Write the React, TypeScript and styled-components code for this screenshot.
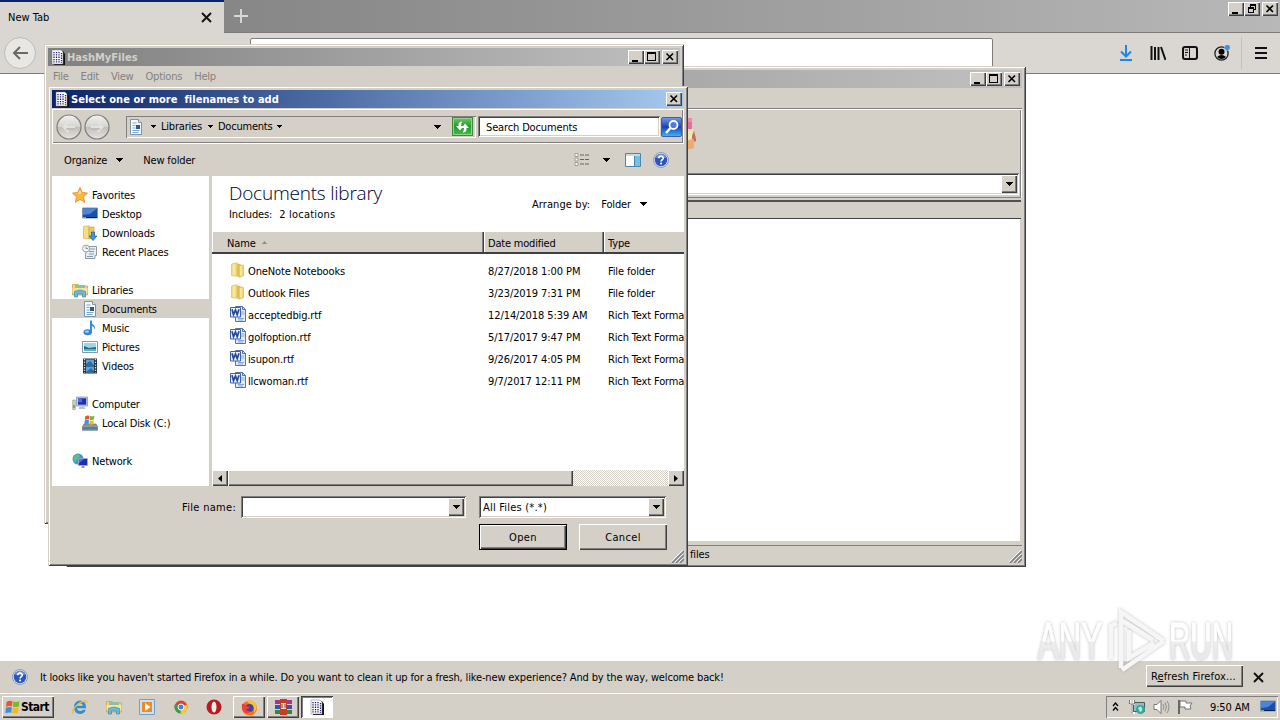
import React from "react";
import styled, { createGlobalStyle, css } from "styled-components";

const FACE = "#d4d0c8";

const Global = createGlobalStyle`
  * { box-sizing: border-box; }
  html, body { margin: 0; padding: 0; }
  body {
    width: 1280px; height: 720px; overflow: hidden; background: #fff; color: #000;
    font: 11px/14px "DejaVu Sans Condensed", "DejaVu Sans", sans-serif;
    font-stretch: condensed;
  }
  svg { display: block; flex: none; }
`;

const raised = css`box-shadow: inset 1px 1px #fff, inset -1px -1px #404040, inset -2px -2px #808080;`;
const sunken = css`box-shadow: inset 1px 1px #808080, inset -1px -1px #fff, inset 2px 2px #404040, inset -2px -2px ${FACE};`;

const Label = styled.span<{ $ls?: number; $ml?: number; $pt?: number }>`
  display: inline-block;
  white-space: pre;
  letter-spacing: ${p => p.$ls ?? -0.14}px;
  margin-left: ${p => p.$ml ?? 0}px;
  padding-top: ${p => p.$pt ?? 1.5}px;
`;
const Slot = styled.div<{ $ml: number }>`flex: none; margin-left: ${p => p.$ml}px;`;

/* ---------- desktop and browser ---------- */
const Desktop = styled.div`position: relative; width: 1280px; height: 720px; overflow: hidden; display: flex; flex-direction: column;`;
const TabStrip = styled.div`
  height: 33px; display: flex; align-items: flex-start; border-bottom: 1px solid #7d7c7a;
  background: linear-gradient(90deg, #808080 0%, #8a8a8a 25%, #a4a4a4 70%, #b8b8b8 100%);
`;
const BrowserTab = styled.div`
  width: 224px; height: 33px; display: flex; align-items: center; justify-content: space-between;
  padding: 0 12px 1px 8px; border-top: 2px solid #0a246a; background: #dad7d2;
`;
const NewTab = styled.div`padding: 9px 0 0 10px; flex: 1;`;
const CaptionButtons = styled.div`display: flex; padding: 2px 2px 0 0;`;
const CaptionButton = styled.div<{ $gap?: boolean }>`
  width: 16px; height: 14px; background: ${FACE}; margin-left: ${p => (p.$gap ? 2 : 0)}px;
  display: grid; place-items: center; ${raised}
`;
const NavBar = styled.div`height: 41px; display: flex; background: #dad7d2; border-bottom: 1px solid #7d7c7a; padding-left: 4px;`;
const BackButton = styled.div`
  width: 32px; height: 32px; margin-top: 4px; border-radius: 50%; background: #e9e7e4; border: 1px solid #bebbb6;
  display: grid; place-items: center;
`;
const UrlBar = styled.div`width: 743px; height: 36px; margin: 5px 0 0 214px; background: #fff; border: 1px solid #7f7d79; border-radius: 2px;`;
const NavIcons = styled.div`display: flex; align-items: center; gap: 16px; margin-left: 125px;`;
const NavSeparator = styled.div`width: 1px; height: 32px; background: #c4c1bc; margin: 0 -5px 0 -5px;`;
const Page = styled.div`flex: 1; background: #fff;`;
const InfoBar = styled.div`height: 32px; background: ${FACE}; display: flex; align-items: center; padding: 0 16px 0 12px;`;
const RefreshButton = styled.div`
  margin-left: auto; margin-top: -2px; width: 97px; height: 22px; padding-left: 5px; line-height: 20px; background: ${FACE}; ${raised}
`;
const Taskbar = styled.div`height: 27px; background: ${FACE}; border-top: 1px solid #fff; display: flex; align-items: flex-start; padding: 2px 2px 0;`;
const StartButton = styled.div`
  width: 52px; height: 22px; display: flex; align-items: center; background: ${FACE}; ${raised}
  padding-left: 2px; font-weight: bold; font-size: 12px; letter-spacing: -0.55px; line-height: 20px;
`;
const QuickLaunch = styled.div`display: flex; align-items: center; gap: 17.5px; height: 22px; padding: 0 11px 0 18px;`;
const TaskButton = styled.div<{ $active?: boolean }>`
  width: 32px; height: 22px; margin-right: 2px; display: grid; place-items: center;
  background: ${p => (p.$active ? "#fff" : FACE)};
  ${p => (p.$active ? css`box-shadow: inset 1px 1px #404040, inset -1px -1px #fff, inset 2px 2px #808080;` : raised)}
`;
const Tray = styled.div`
  margin-left: auto; width: 172px; height: 22px; display: flex; align-items: center; padding-left: 6px;
  box-shadow: inset 1px 1px #808080, inset -1px -1px #fff;
`;

/* ---------- windows ---------- */
const Frame = styled.div<{ $x: number; $y: number; $w: number; $h: number }>`
  position: absolute; left: ${p => p.$x}px; top: ${p => p.$y}px; width: ${p => p.$w}px; height: ${p => p.$h}px;
  background: ${FACE}; padding: 4px; display: flex; flex-direction: column;
  box-shadow: inset 1px 1px ${FACE}, inset -1px -1px #404040, inset 2px 2px #fff, inset -2px -2px #808080;
`;
const TitleBar = styled.div<{ $active?: boolean }>`
  height: 18px; flex: none; display: flex; align-items: center; padding: 0 2px; font-weight: bold;
  color: ${p => (p.$active ? "#fff" : "#d4d0c8")};
  background: ${p => (p.$active ? "linear-gradient(90deg,#0a246a,#a6caf0)" : "linear-gradient(90deg,#808080,#c0c0c0)")};
`;
const TitleButtons = styled.div`display: flex; margin-left: auto;`;
const MenuBar = styled.div`height: 19px; display: flex; padding: 2px 0 0 5px; gap: 12px; color: #84817c;`;

const Rebar = styled.div`
  height: 90px; flex: none; margin-top: 20px; display: flex; flex-direction: column; justify-content: space-between; align-items: flex-end;
  box-shadow: inset 0 1px #808080, inset 0 2px #fff, inset -1px 0 #fff, inset -2px 0 #808080, inset 0 -1px #808080; padding: 10px 3px 3px 0;
`;
const RebarIcon = styled.div`align-self: flex-start; margin-left: 610px;`;
const WideCombo = styled.div`width: 100%; height: 22px; background: #fff; display: flex; justify-content: flex-end; padding: 2px; ${sunken}`;
const DropButton = styled.div`width: 16px; height: 100%; background: ${FACE}; display: grid; place-items: center; ${raised}`;
const ListHeader = styled.div`height: 19px; flex: none; margin: 2px 1px 0 0; border-top: 2px solid #505050; border-bottom: 1px solid #404040; background: ${FACE};`;
const ListBody = styled.div`flex: 1; margin-right: 1px; background: #fff; border-right: 1px solid ${FACE}; border-bottom: 1px solid ${FACE};`;
const StatusBar = styled.div`height: 18px; flex: none; margin-top: 3px; border-top: 1px solid #808080; display: flex; align-items: flex-start; justify-content: space-between; padding-left: 620px;`;
const GripCorner = styled.div`align-self: flex-end;`;

const AddressRow = styled.div`
  height: 35px; flex: none; margin-top: 1px; display: flex; align-items: center; padding: 0 0 0 4px;
  box-shadow: inset 1px 1px #fff, inset -1px -1px #fff, inset 0 -2px #808080, inset -2px 0 #808080;
`;
const NavPair = styled.div`display: flex; gap: 2px;`;
const AddressBox = styled.div`
  width: 350px; height: 22px; margin-left: 16px; display: flex; align-items: center; padding: 0 3px 0 2px;
  box-shadow: inset 1px 1px #808080, inset -1px -1px #fff;
`;
const RefreshIcon = styled.div`
  width: 21px; height: 19px; background: linear-gradient(#6cc765, #229a2b 50%, #45bb4d); border: 1px solid #3d8a3f;
  display: grid; place-items: center; box-shadow: inset 0 0 0 1px #8fd68a;
`;
const SearchBox = styled.div`width: 182px; height: 21px; margin-left: 2px; padding: 3px 8px; background: #fff; ${sunken}`;
const SearchButton = styled.div`
  width: 21px; height: 20px; margin-left: 1px; border: 1px solid #3b5fb0; border-radius: 2px; display: grid; place-items: center;
  background: linear-gradient(#6f97e8, #1d3fb8 50%, #3db3f0);
`;
const CommandBar = styled.div`height: 32px; flex: none; display: flex; align-items: center; padding: 0 15px 0 12px;`;
const Explorer = styled.div`height: 310px; flex: none; display: flex; gap: 3px;`;
const NavPane = styled.div`width: 157px; flex: none; background: #fff; padding-top: 9px;`;
const NavItem = styled.div<{ $child?: boolean; $selected?: boolean; $first?: boolean }>`
  height: 19px; display: flex; align-items: center; gap: 4px;
  padding-left: ${p => (p.$child ? 30 : 20)}px;
  margin-top: ${p => (p.$first ? 19 : 0)}px;
  background: ${p => (p.$selected ? FACE : "transparent")};
`;
const FilePane = styled.div`flex: 1; min-width: 0; overflow: hidden; background: #fff; display: flex; flex-direction: column;`;
const LibraryHead = styled.div`height: 56px; flex: none; display: flex; align-items: flex-start; padding: 5px 37px 0 17px; justify-content: space-between;`;
const LibraryTitle = styled.div`font: 300 19px/25px "Open Sans", "Noto Sans", sans-serif; color: #000028; letter-spacing: -0.22px;`;
const Includes = styled.div`display: flex; gap: 7px;`;
const Arrange = styled.div`display: flex; align-items: center; padding-top: 15px;`;
const Columns = styled.div`height: 22px; flex: none; display: flex; background: ${FACE}; border-bottom: 2px solid #404040;`;
const Column = styled.div<{ $w?: number; $pad: number }>`
  ${p => (p.$w ? css`width: ${p.$w}px; flex: none; border-right: 1px solid #404040; box-shadow: inset -1px 0 #808080, inset 1px 0 #fff;` : css`flex: 1; box-shadow: inset 1px 0 #fff;`)}
  display: flex; align-items: center; padding-left: ${p => p.$pad}px; gap: 6px;
`;
const Rows = styled.div`flex: 1; padding-top: 5px; overflow: hidden;`;
const FileRow = styled.div`height: 22px; display: flex; align-items: center; white-space: nowrap;`;
const NameCell = styled.div`width: 276px; flex: none; display: flex; align-items: center; gap: 2px; padding-left: 18px;`;
const DateCell = styled.div`width: 120px; flex: none;`;
const ScrollTrack = styled.div`
  height: 16px; flex: none; display: flex;
  background: repeating-conic-gradient(#fff 0 25%, ${FACE} 0 50%) 0 0 / 2px 2px;
`;
const ScrollButton = styled.div`width: 16px; height: 16px; background: ${FACE}; display: grid; place-items: center; ${raised}`;
const ScrollThumb = styled.div`width: 345px; margin-right: auto; background: ${FACE}; ${raised}`;
const Form = styled.div`flex: 1; display: flex; flex-direction: column; padding-top: 10px;`;
const FieldRow = styled.div`display: flex; align-items: center; padding-left: 130px; height: 22px;`;
const FieldName = styled.div`width: 59px; flex: none;`;
const Combo = styled.div<{ $w: number; $gap?: number }>`
  width: ${p => p.$w}px; height: 22px; margin-left: ${p => p.$gap ?? 0}px; background: #fff; padding: 2px;
  display: flex; align-items: center; justify-content: space-between; ${sunken}
`;
const ButtonRow = styled.div`display: flex; gap: 12px; padding: 6px 0 0 427px;`;
const DialogButton = styled.div<{ $default?: boolean }>`
  width: 88px; height: 26px; display: grid; place-items: center; background: ${FACE};
  ${p => (p.$default ? css`border: 1px solid #000;` : "")}
  ${raised}
`;
const FormFoot = styled.div`margin-top: auto; display: flex; justify-content: flex-end;`;
const Watermark = styled.div`position: absolute; left: 1030px; top: 604px; pointer-events: none;`;

/* ---------- glyphs ---------- */
const Min = () => <svg width="16" height="14"><path d="M4 10h6v2H4z" /></svg>;
const Max = () => <svg width="16" height="14" shapeRendering="crispEdges"><path d="M3 2h9v9H3zM4 4v6h7V4z" fillRule="evenodd" /></svg>;
const Restore = () => <svg width="16" height="14" shapeRendering="crispEdges"><path d="M6 2h6v6h-2V7h1V4H7v1H6zM4 5h6v6H4zM5 7v3h4V7z" fillRule="evenodd" /></svg>;
const Close = () => <svg width="16" height="14"><path d="M4.500 3.500l6.500 6.500M11 3.500L4.500 10" stroke="#000" strokeWidth="1.600" /></svg>;
const BigX = () => <svg width="11" height="11"><path d="M1 1l9 9M10 1l-9 9" stroke="#111" strokeWidth="1.900" /></svg>;
const Tri = ({ s = 7 }: { s?: 5 | 7 }) => (
  <svg width={s} height={(s + 1) / 2} shapeRendering="crispEdges">
    <path d={s === 5 ? "M0 0h5v1H4v1H3v1H2V2H1V1H0z" : "M0 0h7v1H6v1H5v1H4v1H3V3H2V2H1V1H0z"} />
  </svg>
);
const Side = ({ right }: { right?: boolean }) => <svg width="4" height="7" viewBox="0 0 4 7"><path d={right ? "M0 0l4 3.500L0 7z" : "M4 0L0 3.500 4 7z"} /></svg>;
const Grip = () => (
  <svg width="13" height="13"><path d="M1 13L13 1M5 13l8-8M9 13l4-4" stroke="#808080" strokeWidth="1.600" /><path d="M0 12L12 0M4 12l8-8M8 12l4-4" stroke="#fff" strokeWidth=".8" /></svg>
);
const HashIcon = () => (
  <svg width="16" height="16">
    <path d="M4 2h9l2 3v11H4z" fill="#111" /><path d="M2 1h9l2 2v12H2z" fill="#fff" stroke="#777" strokeWidth=".5" />
    <path d="M4 3v11M6.500 3v11M9 3v11M11.500 4v10" stroke="#1c1c6c" strokeWidth="1.300" strokeDasharray="1.300 1" />
  </svg>
);
const Help = () => (
  <svg width="16" height="16"><circle cx="8" cy="8" r="7.500" fill="#d7e2f5" stroke="#7c8cae" strokeWidth=".8" /><circle cx="8" cy="8" r="6.200" fill="#2b55b8" /><path d="M3 6a5 4 0 0110 0z" fill="#6d93dd" />
    <path d="M5.800 6.300c0-3 4.500-2.900 4.500-.3 0 1.600-2.200 1.500-2.200 3.400" fill="none" stroke="#fff" strokeWidth="1.600" /><rect x="7.200" y="10.600" width="1.800" height="1.800" fill="#fff" /></svg>
);
const DocPage = () => (
  <svg width="16" height="16"><path d="M2.500.5h8l3 3v12h-11z" fill="#f4f9fd" stroke="#7d95ac" /><path d="M10.500.5v3h3" fill="#d6e6f4" stroke="#7d95ac" /><path d="M4.500 4h4M4.500 6.500h3M4.500 9h3M4.500 11.500h7M4.500 13.500h6" stroke="#7aa7cc" /><rect x="8" y="6" width="4" height="4" fill="#31598a" /></svg>
);
const NavCircle = ({ back }: { back?: boolean }) => (
  <svg width="26" height="26">
    <defs><linearGradient id="nc" x2="0" y2="1"><stop stopColor="#f3f2f0" /><stop offset=".48" stopColor="#d6d4d0" /><stop offset=".52" stopColor="#c3c0bb" /><stop offset="1" stopColor="#e6e4e0" /></linearGradient></defs>
    <circle cx="13" cy="13" r="12" fill="url(#nc)" stroke="#7f7d79" strokeWidth="1.200" />
    <path d={back ? "M19 13H8M12.500 8L7.500 13l5 5" : "M7 13h11M13.500 8l5 5-5 5"} fill="none" stroke="#e4e2de" strokeWidth="2" /><path d={back ? "M19 15H10" : "M7 15h9"} stroke="#b0ada8" strokeWidth=".7" />
  </svg>
);
const Folder = () => (
  <svg width="16" height="16">
    <path d="M1.500 2L7 .7v13.600l-5.500-.8z" fill="#f3dd83" stroke="#d3b855" strokeWidth=".6" />
    <path d="M7 1.500l3.500.5v13L7 14.500z" fill="#e3c04e" /><path d="M9 3l4.500.3v10.400L9 15.300z" fill="#f0d67a" stroke="#cfae48" strokeWidth=".6" />
    <path d="M4 2.500v10.500M11 4v9.500" stroke="#fbf0b8" strokeWidth="1.100" />
  </svg>
);
const Word = () => (
  <svg width="16" height="16"><path d="M5.500.5h7l3 3v12h-10z" fill="#e3ecfa" stroke="#5672a8" /><path d="M12.500.5v3h3" fill="none" stroke="#5672a8" /><path d="M11 6h3.500M11 8h3.500M8 12.500h6M8 14h5" stroke="#86a5d6" /><path d="M.5 1.500h10v9.500H.5z" fill="#edf2fc" stroke="#3d62a8" /><path d="M2 3.200l1.500 5.500L5.500 4l1.700 4.700L9 3.200" fill="none" stroke="#2348a0" strokeWidth="1.700" /></svg>
);
const Star = () => <svg width="16" height="16"><path d="M8 .5l2.200 5 5.300.6-4 3.700 1.100 5.500L8 12.500l-4.600 2.800 1.100-5.500-4-3.700 5.300-.6z" fill="#f9b840" stroke="#d98920" strokeWidth=".8" /><path d="M8 3l1.300 3.500L6 7z" fill="#fde3a0" /></svg>;
const Screen = () => <svg width="16" height="16"><path d="M.5 2h15v10H.5z" fill="#1c4fa8" stroke="#7f93b5" /><path d="M1 2.500h14L8 8 1 9z" fill="#4b86d8" /><path d="M1 11.500h14" stroke="#0c1d48" /><path d="M1 11.500h3" stroke="#5bc45b" /></svg>;
const Downloads = () => <svg width="16" height="16"><path d="M1.500 1.500L7 .7v13.100l-5.500-.5z" fill="#f4df87" stroke="#d3b34a" strokeWidth=".7" /><path d="M7 2h5v11l-5 1z" fill="#e9c95c" stroke="#c9a63a" strokeWidth=".7" /><path d="M9.500 7h3v4H15l-4 4.500L7 11h2.500z" fill="#3f96dc" stroke="#1c5fa4" strokeWidth=".7" /></svg>;
const Recent = () => <svg width="16" height="16"><path d="M5 2.500h9.500v9H13v3H3.500v-4z" fill="#e8edf1" stroke="#8c979f" /><path d="M7 5h6M7 7.500h5M7 10h5M5 12.500h6" stroke="#7e9db6" /><circle cx="4" cy="4.500" r="3.500" fill="#f2f3f4" stroke="#9ea3a8" /><path d="M4 2.500v2h2" fill="none" stroke="#666" strokeWidth=".7" /></svg>;
const Libs = () => <svg width="16" height="16"><path d="M.5 2.500h6l1 1.500h8v9H.5z" fill="#f0d87c" stroke="#c6a544" strokeWidth=".8" /><path d="M3 3h10v3H3z" fill="#8fc0a0" /><path d="M.5 6h15v5H.5z" fill="#f6e596" /><path d="M2.500 15V9.500q5.500-3 11 0V15h-3v-3h-5v3z" fill="#70b7dd" stroke="#3f87b4" strokeWidth=".7" /></svg>;
const Music = () => <svg width="16" height="16"><path d="M8 1c.5 3 6.500 3.500 5 9-.5-3-2.500-4-4-4v6.500z" fill="#3a9be6" /><path d="M9 .5v12" stroke="#2a86d8" strokeWidth="1.800" /><ellipse cx="5.700" cy="12.300" rx="4.200" ry="3" fill="#3286d8" /><ellipse cx="5" cy="11.600" rx="2" ry="1.200" fill="#a5d8fa" /></svg>;
const Pictures = () => <svg width="16" height="16"><path d="M.5 2.500h15v11H.5z" fill="#fff" stroke="#8298ab" /><path d="M2 4h12v8H2z" fill="#9bd6ee" /><path d="M2 7l5 2 7-1v4H2z" fill="#286a80" /><path d="M2 10h12v2H2z" fill="#56b4c4" /></svg>;
const Videos = () => <svg width="16" height="16"><path d="M1 .5h14v15H1z" fill="#22303e" /><path d="M4 1.500h8v6H4zM4 8.500h8v6H4z" fill="#5da3d4" /><path d="M4 6l4-3 4 4.500H4zM4 14l5-4 3 3v1.500H4z" fill="#2a6d9c" /><path d="M2.500 1v14M13.500 1v14" stroke="#dce4ea" strokeWidth="1.300" strokeDasharray="1.300 1.400" /></svg>;
const Computer = () => <svg width="16" height="16"><path d="M4.500 1h11v9h-11z" fill="#c9cfdb" stroke="#8c96a8" strokeWidth=".8" /><path d="M6 2.300h8.200v6.400H6z" fill="#1b2fb0" /><path d="M6 2.300h4v4H6z" fill="#4d6de0" /><path d="M8 10.500h4l1.500 2.500h-7z" fill="#b9bfc9" /><path d="M.7 4h2.600v9.500H.7z" fill="#cfd5cf" stroke="#8a928a" strokeWidth=".6" /><path d="M1 9h2v3H1z" fill="#66b366" /></svg>;
const WinFlag = () => <><path d="M1 1.500Q4 0 6.500 1L6 6Q3.500 5 .4 6.500z" fill="#e8562a" /><path d="M7.300 1.300Q10 2.300 13 1l-.6 5Q10 7 6.900 6.200z" fill="#78b92d" /><path d="M.3 7.200Q3.500 5.800 5.900 6.800L5.400 12Q3 11-.2 12.300z" fill="#3d8fdc" /><path d="M6.800 7Q9.500 8 12.300 6.900l-.7 5.200Q9 13 6.200 12.200z" fill="#f7b81e" /></>;
const Disk = () => <svg width="16" height="16"><path d="M2 9h12l1.700 3v3.300H.3V12z" fill="#8d979f" stroke="#5a646c" strokeWidth=".6" /><path d="M1 12h14v2.500H1z" fill="#4c8595" /><g transform="translate(2.500 0) scale(.76)"><WinFlag /></g></svg>;
const Network = () => <svg width="16" height="16"><circle cx="6" cy="6" r="5.500" fill="#3b9ad1" /><path d="M2 3q4-3 6 0Q5 6 3 9 .5 7 2 3z" fill="#5cc085" /><path d="M6.500 5.500h9v7h-9z" fill="#1a2fb5" stroke="#a0abc4" strokeWidth=".9" /><path d="M7 6h5l-5 4z" fill="#5574e4" /><path d="M9.500 13h3v2h-3z" fill="#9098a6" /></svg>;

const WindowButtons = () => (
  <>
    <CaptionButton><Min /></CaptionButton>
    <CaptionButton><Max /></CaptionButton>
    <CaptionButton $gap><Close /></CaptionButton>
  </>
);

type NavEntry = { label: string; icon: React.ReactNode; child?: boolean; selected?: boolean; first?: boolean };
const navEntries: NavEntry[] = [
  { label: "Favorites", icon: <Star /> },
  { label: "Desktop", icon: <Screen />, child: true },
  { label: "Downloads", icon: <Downloads />, child: true },
  { label: "Recent Places", icon: <Recent />, child: true },
  { label: "Libraries", icon: <Libs />, first: true },
  { label: "Documents", icon: <DocPage />, child: true, selected: true },
  { label: "Music", icon: <Music />, child: true },
  { label: "Pictures", icon: <Pictures />, child: true },
  { label: "Videos", icon: <Videos />, child: true },
  { label: "Computer", icon: <Computer />, first: true },
  { label: "Local Disk (C:)", icon: <Disk />, child: true },
  { label: "Network", icon: <Network />, first: true },
];

const files = [
  ["OneNote Notebooks", "8/27/2018 1:00 PM", "File folder"],
  ["Outlook Files", "3/23/2019 7:31 PM", "File folder"],
  ["acceptedbig.rtf", "12/14/2018 5:39 AM", "Rich Text Format"],
  ["golfoption.rtf", "5/17/2017 9:47 PM", "Rich Text Format"],
  ["isupon.rtf", "9/26/2017 4:05 PM", "Rich Text Format"],
  ["llcwoman.rtf", "9/7/2017 12:11 PM", "Rich Text Format"],
];

const menus = ["File", "Edit", "View", "Options", "Help"];

const Browser = () => (
  <>
    <TabStrip>
      <BrowserTab><Label $ls={0}>New Tab</Label><BigX /></BrowserTab>
      <NewTab><svg width="14" height="14"><path d="M7 0v14M0 7h14" stroke="#d8d8d8" strokeWidth="1.900" /></svg></NewTab>
      <CaptionButtons>
        <CaptionButton><Min /></CaptionButton>
        <CaptionButton><Restore /></CaptionButton>
        <CaptionButton $gap><Close /></CaptionButton>
      </CaptionButtons>
    </TabStrip>
    <NavBar>
      <BackButton><svg width="16" height="14"><path d="M16 7H2M8 1L2 7l6 6" fill="none" stroke="#6b6967" strokeWidth="2" /></svg></BackButton>
      <UrlBar />
      <NavIcons>
        <svg width="16" height="16"><path d="M8 0v11M3 6.500l5 5 5-5M2 15h12" fill="none" stroke="#1f86ea" strokeWidth="2" /></svg>
        <svg width="16" height="16"><path d="M1.500 1v14M5 2v13M8.500 2v13M11 2l4.500 13" fill="none" stroke="#111" strokeWidth="2" /></svg>
        <svg width="16" height="16"><rect x="1" y="2" width="14" height="12" rx="2" fill="none" stroke="#111" strokeWidth="2" /><path d="M7.500 2v12M3 5h3M3 7.500h3M3 10h2" stroke="#111" /></svg>
        <svg width="16" height="16"><circle cx="7.500" cy="8.500" r="6.600" fill="none" stroke="#222" strokeWidth="1.300" /><circle cx="7.500" cy="6.700" r="3" /><path d="M3 12q4.500-4 9 0-4.500 4-9 0z" /><circle cx="13.300" cy="2.500" r="3" fill="#3a8fe6" stroke="#dad7d2" strokeWidth=".6" /></svg>
        <NavSeparator />
        <svg width="14" height="16"><path d="M2 3h12M2 8h12M2 13h12" stroke="#111" strokeWidth="2" /></svg>
      </NavIcons>
    </NavBar>
    <Page />
    <InfoBar>
      <Help />
      <Label $ml={12} $ls={-0.147}>It looks like you haven't started Firefox in a while. Do you want to clean it up for a fresh, like-new experience? And by the way, welcome back!</Label>
      <RefreshButton><Label $ls={0.13}>R<u>e</u>fresh Firefox...</Label></RefreshButton>
      <Slot $ml={10}><BigX /></Slot>
    </InfoBar>
  </>
);

const BackWindow = () => (
  <Frame $x={66} $y={66} $w={960} $h={501}>
    <TitleBar><TitleButtons><WindowButtons /></TitleButtons></TitleBar>
    <Rebar>
      <RebarIcon><svg width="16" height="34"><path d="M6 0h6v4H6z" fill="#f08aa6" /><path d="M6 4h6v7H6z" fill="#ee6c98" /><path d="M6 11h7l-1 9-6 3z" fill="#f9e7ad" /><path d="M12 18l2-5 2.500 10-4 1z" fill="#b87253" /><path d="M6 23l5-1 3-1v9q-4 2-8 1z" fill="#f3a86c" /></svg></RebarIcon>
      <WideCombo><DropButton><Tri /></DropButton></WideCombo>
    </Rebar>
    <ListHeader />
    <ListBody />
    <StatusBar><Label>files</Label><GripCorner><Grip /></GripCorner></StatusBar>
  </Frame>
);

const HashWindow = () => (
  <Frame $x={44} $y={44} $w={640} $h={480}>
    <TitleBar><HashIcon /><Label $ml={1} $ls={0.02}>HashMyFiles</Label><TitleButtons><WindowButtons /></TitleButtons></TitleBar>
    <MenuBar>{menus.map(m => <Label key={m} $pt={2} $ls={-0.22}>{m}</Label>)}</MenuBar>
  </Frame>
);

const FileDialog = () => (
  <Frame $x={48} $y={86} $w={640} $h={480}>
    <TitleBar $active>
      <HashIcon /><Label $ml={1} $ls={0.04}>Select one or more  filenames to add</Label>
      <TitleButtons><CaptionButton><Close /></CaptionButton></TitleButtons>
    </TitleBar>
    <AddressRow>
      <NavPair><NavCircle back /><NavCircle /></NavPair>
      <AddressBox>
        <DocPage />
        <Slot $ml={7}><Tri s={5} /></Slot><Label $ml={5} $ls={-0.2}>Libraries</Label>
        <Slot $ml={6}><Tri s={5} /></Slot><Label $ml={5} $ls={-0.22}>Documents</Label>
        <Slot $ml={5}><Tri s={5} /></Slot>
        <TitleButtons><Tri /></TitleButtons>
        <Slot $ml={11}><RefreshIcon><svg width="17" height="14"><path d="M8.500 1.500Q4.500 1.500 4.500 5v1H2l4 4.500L9.500 6H7Q7 3 8.500 1.500zM8.500 12.500q4 0 4-3.500V8H15l-4-4.500L7.800 8H10q0 3-1.500 4.500z" fill="#fff" /></svg></RefreshIcon></Slot>
      </AddressBox>
      <SearchBox><Label>Search Documents</Label></SearchBox>
      <SearchButton><svg width="16" height="16"><circle cx="9.500" cy="6" r="4" fill="#4d7be0" stroke="#fff" strokeWidth="1.800" /><path d="M6.500 9L2 14" stroke="#fff" strokeWidth="2.400" /></svg></SearchButton>
    </AddressRow>
    <CommandBar>
      <Label>Organize</Label><Slot $ml={9}><Tri /></Slot><Label $ml={20}>New folder</Label>
      <TitleButtons>
        <svg width="16" height="14"><path d="M1 .5h3v3H1zM1 5h3v3H1zM1 9.500h3v3H1z" fill="#f3f3f3" stroke="#888" strokeWidth=".7" /><path d="M6 2h4M6 6.500h4M6 11h4M11 2h4M11 6.500h4M11 11h4" stroke="#666" /></svg>
      </TitleButtons>
      <Slot $ml={13}><Tri /></Slot>
      <Slot $ml={15}><svg width="16" height="14"><path d="M.5.500h15v13H.5z" fill="#fff" stroke="#4d86a6" /><path d="M1 1h14v2H1z" fill="#cbd9e4" /><path d="M9.500 3v10" stroke="#4d86a6" /><path d="M10 3h5v10h-5z" fill="#6fc3e8" /></svg></Slot>
      <Slot $ml={12}><Help /></Slot>
    </CommandBar>
    <Explorer>
      <NavPane>
        {navEntries.map(e => (
          <NavItem key={e.label} $child={e.child} $selected={e.selected} $first={e.first}>{e.icon}<Label $pt={2.5} $ls={-0.18}>{e.label}</Label></NavItem>
        ))}
      </NavPane>
      <FilePane>
        <LibraryHead>
          <div>
            <LibraryTitle>Documents library</LibraryTitle>
            <Includes><Label>Includes:</Label><Label $ls={0.2}>2 locations</Label></Includes>
          </div>
          <Arrange><Label $ls={0.1}>Arrange by:</Label><Label $ml={11}>Folder</Label><Slot $ml={9}><Tri /></Slot></Arrange>
        </LibraryHead>
        <Columns>
          <Column $w={272} $pad={15}><Label $pt={4}>Name</Label><svg width="5" height="3"><path d="M0 3l2.500-3L5 3z" fill="#8c8a86" /></svg></Column>
          <Column $w={120} $pad={4}><Label $pt={4} $ls={-0.2}>Date modified</Label></Column>
          <Column $pad={4}><Label $pt={4}>Type</Label></Column>
        </Columns>
        <Rows>
          {files.map(([name, date, type]) => (
            <FileRow key={name}>
              <NameCell>{type === "File folder" ? <Folder /> : <Word />}<Label $pt={3}>{name}</Label></NameCell>
              <DateCell><Label $pt={3} $ls={-0.08}>{date}</Label></DateCell>
              <Label $pt={3}>{type}</Label>
            </FileRow>
          ))}
        </Rows>
        <ScrollTrack>
          <ScrollButton><Side /></ScrollButton><ScrollThumb /><ScrollButton><Side right /></ScrollButton>
        </ScrollTrack>
      </FilePane>
    </Explorer>
    <Form>
      <FieldRow>
        <FieldName><Label $ls={0.3}>File name:</Label></FieldName>
        <Combo $w={225}><span /><DropButton><Tri /></DropButton></Combo>
        <Combo $w={187} $gap={13}><Label $ml={2} $ls={0.2}>All Files (*.*)</Label><DropButton><Tri /></DropButton></Combo>
      </FieldRow>
      <ButtonRow>
        <DialogButton $default><Label $ls={0.35}>Open</Label></DialogButton>
        <DialogButton><Label $ls={0.35}>Cancel</Label></DialogButton>
      </ButtonRow>
      <FormFoot><Grip /></FormFoot>
    </Form>
  </Frame>
);

const TaskbarRow = () => (
  <Taskbar>
    <StartButton><svg width="17" height="16" viewBox="-1 -1 15 15"><WinFlag /></svg><span>Start</span></StartButton>
    <QuickLaunch>
      <svg width="16" height="16"><path d="M14 9.300H5Q5.300 12 8.300 12q1.800 0 2.700-1.300h2.700Q12.300 15 8 15q-6-.5-6-7Q2 2 8.300 1.500 14.500 2 14 9.300zM5 6.800h6Q10.600 4.500 8 4.500T5 6.800z" fill="#2e8fd6" fillRule="evenodd" /><path d="M1.500 14.500Q-1 10.500 7 4.500 15-.5 15 4" fill="none" stroke="#f0bd36" strokeWidth="1.500" /></svg>
      <Libs />
      <svg width="16" height="16"><path d="M.5.500h15v15H.5z" fill="#c6e2f3" stroke="#6fa3c8" /><path d="M3 3h10v10H3z" fill="#f08a22" /><path d="M6 4l5.500 4L6 12z" fill="#fff" /></svg>
      <svg width="16" height="16"><circle cx="8" cy="8" r="6.500" fill="#e24132" /><path d="M8 8L2.300 4.800A6.500 6.500 0 007.500 14.500z" fill="#2ea350" /><path d="M8 8l6-2.500A6.500 6.500 0 017.500 14.500z" fill="#f8cc33" /><circle cx="8" cy="8" r="3" fill="#4483e6" stroke="#fff" /></svg>
      <svg width="16" height="16"><circle cx="8" cy="8" r="7.500" fill="#b81a20" /><ellipse cx="8" cy="8" rx="2.500" ry="5.500" fill="#f1eeea" /></svg>
    </QuickLaunch>
    <TaskButton><svg width="17" height="17"><circle cx="8.500" cy="9" r="7.500" fill="#f4731e" /><path d="M5 2q7-2 10 3.500 2 5-2 8 1-6-3-8z" fill="#fdc12b" /><circle cx="8.500" cy="9" r="4" fill="#4a3fa0" /><path d="M1 5q3-1 4 2l4 1q-2 3-4 2 1 3 5 2-4 4-7 1-3-3-2-8z" fill="#ee3f38" /></svg></TaskButton>
    <TaskButton><svg width="17" height="16"><path d="M0 1h17v4H0z" fill="#a8358c" /><path d="M0 6h17v4H0z" fill="#3453b4" /><path d="M0 11h17v4H0z" fill="#2f8b3a" /><path d="M5 0h7v16H5z" fill="#cb3a26" /><path d="M6 4h5v6H6z" fill="#e9dfc8" /><path d="M7 5v4M10 5v4" stroke="#644" /></svg></TaskButton>
    <TaskButton $active><HashIcon /></TaskButton>
    <Tray>
      <svg width="7" height="10"><path d="M1 4l2.500-3L6 4M1 8.500l2.500-3L6 8.500" fill="none" stroke="#000" strokeWidth="1.300" /></svg>
      <Slot $ml={10}><svg width="17" height="16"><path d="M4.500 3.500h11v9h-11z" fill="#8fbfc0" stroke="#4c5a5c" /><path d="M1 1v4h4V1M3 5v9h3" fill="none" stroke="#fff" strokeWidth="2" /><path d="M.5 1v4h5V1M3 5v10" fill="none" stroke="#555" strokeWidth=".8" /><circle cx="11.500" cy="10.500" r="4.500" fill="#38a69c" /><path d="M9 9q3-3 4 0t-2 4z" fill="#b8e8d8" /></svg></Slot>
      <Slot $ml={7}><svg width="17" height="16"><path d="M1 5.500h3l4-4v13l-4-4H1z" fill="#fff" stroke="#777" /><path d="M10 5q2 3 0 6M12 3.500q3 4.500 0 9M14 2q4 6 0 12" fill="none" stroke="#888" strokeWidth=".9" /></svg></Slot>
      <Slot $ml={7}><svg width="17" height="16"><path d="M2 1v14" stroke="#666" strokeWidth="2" /><path d="M3 2h6v2h6l-2 3 1 3H8V8H3z" fill="#fff" stroke="#777" /></svg></Slot>
      <Label $ml={16}>9:50 AM</Label>
      <Slot $ml={10}><Screen /></Slot>
    </Tray>
  </Taskbar>
);

const Brand = () => (
  <Watermark>
    <svg width="215" height="76">
      <defs>
        <linearGradient id="wm" x1="0" x2="0" y1="19" y2="56" gradientUnits="userSpaceOnUse"><stop offset=".48" stopColor="#fff" /><stop offset=".52" stopColor="#ededed" /><stop offset="1" stopColor="#e8e8e8" /></linearGradient>
        <filter id="soft" x="-10%" y="-10%" width="120%" height="120%"><feDropShadow dx="0" dy="0" stdDeviation="1.600" floodColor="#888" floodOpacity=".6" /></filter>
      </defs>
      <g filter="url(#soft)" fontFamily="'Liberation Sans Narrow', 'Liberation Sans', sans-serif" fontSize="51" fill="url(#wm)" stroke="url(#wm)" strokeWidth="1">
        <text x="8" y="55" textLength="64" lengthAdjust="spacingAndGlyphs">ANY</text>
        <text x="139" y="55" textLength="64" lengthAdjust="spacingAndGlyphs">RUN</text>
      </g>
      <g filter="url(#soft)" fill="none" stroke="#f6f6f6" strokeWidth="4.500">
        <path d="M81 55V22l6-3" />
        <path d="M91 64V8l43 29M91 16l32 20" />
        <path d="M134 37L92 66M124 39L99 54V26" />
      </g>
    </svg>
  </Watermark>
);

export default function App() {
  return (
    <Desktop>
      <Global />
      <Browser />
      <TaskbarRow />
      <BackWindow />
      <HashWindow />
      <FileDialog />
      <Brand />
    </Desktop>
  );
}
